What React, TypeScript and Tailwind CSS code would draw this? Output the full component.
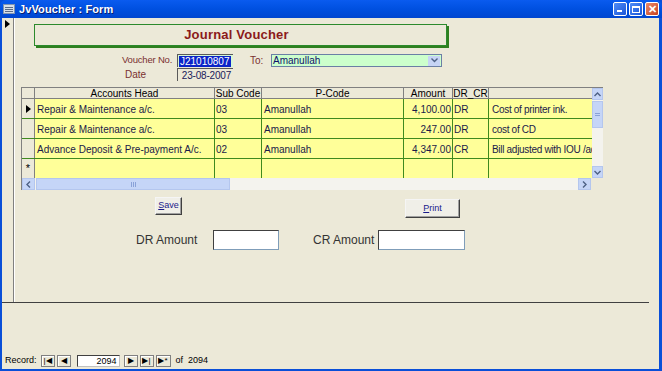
import React from 'react';

const rows = [
  { head: 'Repair & Maintenance a/c.', sub: '03', p: 'Amanullah', amt: '4,100.00', drcr: 'DR', memo: 'Cost of printer ink.', current: true },
  { head: 'Repair & Maintenance a/c.', sub: '03', p: 'Amanullah', amt: '247.00', drcr: 'DR', memo: 'cost of CD' },
  { head: 'Advance Deposit & Pre-payment A/c.', sub: '02', p: 'Amanullah', amt: '4,347.00', drcr: 'CR', memo: 'Bill adjusted with IOU /ad' },
];

const cols = 'grid grid-cols-[13px_180px_47px_142px_49px_36px_103px]';

function NavBtn({ children, w = 'w-[14px]' }: { children: React.ReactNode; w?: string }) {
  return (
    <div className={`${w} h-[12px] bg-[#ECE9D8] border border-[#808080] shadow-[inset_1px_1px_0_#fff] flex items-center justify-center text-[8px] leading-none text-black`}>
      {children}
    </div>
  );
}

export default function App() {
  return (
    <div className="w-[662px] h-[371px] bg-[#0A4FD8] font-['Liberation_Sans',Arial,sans-serif] overflow-hidden flex flex-col">
      {/* title bar */}
      <div className="h-[18px] flex items-center bg-gradient-to-b from-[#0A5BEF] via-[#0050E0] to-[#0046D0] rounded-t-[6px] pl-[3px] pr-[3px]">
        <div className="w-[12px] h-[10px] bg-[#d8dfe8] border border-[#8093b0] flex flex-col justify-center gap-[1px] px-[1px]">
          <div className="h-[1px] bg-[#5a6a86]" />
          <div className="h-[1px] bg-[#5a6a86]" />
          <div className="h-[1px] bg-[#5a6a86]" />
        </div>
        <span className="ml-[4px] text-white font-bold text-[11px] tracking-[0.1px] [text-shadow:1px_1px_0_#0a1e70]">JvVoucher : Form</span>
        <div className="ml-auto flex gap-[2px]">
          <div className="w-[14px] h-[14px] rounded-[2px] border border-white bg-gradient-to-br from-[#4f8cf7] to-[#1b55d8] flex items-end justify-start pl-[3px] pb-[3px]">
            <div className="w-[5px] h-[2px] bg-white" />
          </div>
          <div className="w-[14px] h-[14px] rounded-[2px] border border-white bg-gradient-to-br from-[#4f8cf7] to-[#1b55d8] flex items-center justify-center">
            <div className="w-[8px] h-[7px] border border-white border-t-2" />
          </div>
          <div className="w-[14px] h-[14px] rounded-[2px] border border-white bg-gradient-to-br from-[#e88a6a] to-[#c7401c] flex items-center justify-center text-white text-[11px] font-bold leading-none">
            ✕
          </div>
        </div>
      </div>

      {/* body */}
      <div className="flex-1 mx-[2px] mr-[3px] mb-[2px] bg-[#ECE9D8] flex flex-col">
        <div className="h-[285px] flex border-b border-[#404040] mr-[10px]">
          {/* record selector */}
          <div className="w-[12px] border-r border-[#808080] shadow-[1px_0_0_#fff] pt-[2px] pl-[3px]">
            <div className="w-0 h-0 border-y-[4px] border-y-transparent border-l-[5px] border-l-black" />
          </div>

          <div className="flex-1 pl-[20px] pt-[6px] text-[11px]">
            {/* title */}
            <div className="w-[413px] h-[22px] border border-[#2c8a2c] shadow-[2px_2px_0_#2f7f1f] bg-[#ECE9D8] flex items-center justify-center">
              <span className="ml-[-8px] text-[#8B1A1A] font-bold text-[13px] tracking-[0.2px]">Journal Voucher</span>
            </div>

            {/* voucher no + to */}
            <div className="flex items-center mt-[8px] ml-[88px] h-[13px]">
              <span className="w-[55px] whitespace-nowrap text-[9.5px] tracking-[-0.2px] text-[#7a3030]">Voucher No.</span>
              <div className="w-[56px] h-[13px] bg-[#D6F7D6] border-t border-l border-[#5a5a5a] flex items-center pl-[1px]">
                <span className="bg-[#0A24C8] text-white text-[10px] leading-[11px] px-[1px]">J21010807</span>
              </div>
              <span className="ml-[17px] w-[21px] text-[10px] text-[#7a3030]">To:</span>
              <div className="w-[171px] h-[13px] bg-[#CCFFCC] border border-[#6b7fa5] flex items-center">
                <span className="pl-[1px] text-[10px] text-[#10106a] flex-1">Amanullah</span>
                <div className="w-[12px] h-[10px] mr-[1px] bg-[#c6d4f5] flex items-center justify-center">
                  <svg width="7" height="5" viewBox="0 0 7 5"><path d="M0.5 0.5 L3.5 3.5 L6.5 0.5" stroke="#4d6185" strokeWidth="1.4" fill="none" /></svg>
                </div>
              </div>
            </div>
            <div className="flex items-center mt-[1px] ml-[91px] h-[13px]">
              <span className="w-[52px] text-[10px] text-[#7a3030]">Date</span>
              <div className="w-[56px] h-[13px] bg-[#ECE9D8] border-t border-l border-[#5a5a5a] flex items-center justify-end pr-[2px]">
                <span className="text-[10px] text-[#1a1a5a] tracking-[-0.2px]">23-08-2007</span>
              </div>
            </div>

            {/* grid */}
            <div className="mt-[6px] ml-[-13px] w-[582px] border-t border-l border-[#808080] flex flex-col text-[10px] text-[#1a1a4a]">
              <div className="flex">
                <div className="w-[570px]">
                  <div className={`${cols} h-[11px] bg-[#ECE9D8] border-b border-[#808080]`}>
                    <div className="border-r border-[#808080]" />
                    <div className="border-r border-[#808080] text-center leading-[11px] text-black">Accounts Head</div>
                    <div className="border-r border-[#808080] text-center leading-[11px] text-black">Sub Code</div>
                    <div className="border-r border-[#808080] text-center leading-[11px] text-black">P-Code</div>
                    <div className="border-r border-[#808080] text-center leading-[11px] text-black">Amount</div>
                    <div className="border-r border-[#808080] text-center leading-[11px] text-black">DR_CR</div>
                    <div />
                  </div>
                  {rows.map((r, i) => (
                    <div key={i} className={`${cols} h-[20px] border-b border-[#3f8a1f]`}>
                      <div className="bg-[#ECE9D8] border-r border-[#808080] flex items-center justify-center">
                        {r.current && <div className="w-0 h-0 border-y-[4px] border-y-transparent border-l-[5px] border-l-black" />}
                      </div>
                      <div className="bg-[#FFFF99] border-r border-[#3f8a1f] pl-[2px] pt-[3px] whitespace-nowrap overflow-hidden">{r.head}</div>
                      <div className="bg-[#FFFF99] border-r border-[#3f8a1f] pl-[1px] pt-[3px]">{r.sub}</div>
                      <div className="bg-[#FFFF99] border-r border-[#3f8a1f] pl-[2px] pt-[3px]">{r.p}</div>
                      <div className="bg-[#FFFF99] border-r border-[#3f8a1f] pr-[1px] pt-[3px] text-right">{r.amt}</div>
                      <div className="bg-[#FFFF99] border-r border-[#3f8a1f] pl-[1px] pt-[3px]">{r.drcr}</div>
                      <div className="bg-[#FFFF99] pl-[3px] pt-[3px] whitespace-nowrap tracking-[-0.3px]">{r.memo}</div>
                    </div>
                  ))}
                  <div className={`${cols} h-[19px]`}>
                    <div className="bg-[#ECE9D8] border-r border-[#808080] flex items-center justify-center text-[11px] text-black">*</div>
                    <div className="bg-[#FFFF99] border-r border-[#3f8a1f]" />
                    <div className="bg-[#FFFF99] border-r border-[#3f8a1f]" />
                    <div className="bg-[#FFFF99] border-r border-[#3f8a1f]" />
                    <div className="bg-[#FFFF99] border-r border-[#3f8a1f]" />
                    <div className="bg-[#FFFF99] border-r border-[#3f8a1f]" />
                    <div className="bg-[#FFFF99]" />
                  </div>
                </div>
                {/* vertical scrollbar */}
                <div className="w-[12px] bg-[#F4F3EE] flex flex-col">
                  <div className="h-[12px] bg-[#C5D5F7] border border-[#b4c6ee] flex items-center justify-center">
                    <svg width="7" height="5" viewBox="0 0 7 5"><path d="M0.5 4 L3.5 1 L6.5 4" stroke="#4d6185" strokeWidth="1.4" fill="none" /></svg>
                  </div>
                  <div className="h-[27px] mt-[1px] bg-[#C5D5F7] border border-[#b4c6ee] flex flex-col items-center justify-center gap-[1px]">
                    <div className="w-[5px] h-[1px] bg-[#8aa2d8]" />
                    <div className="w-[5px] h-[1px] bg-[#8aa2d8]" />
                  </div>
                  <div className="flex-1" />
                  <div className="h-[12px] bg-[#C5D5F7] border border-[#b4c6ee] flex items-center justify-center">
                    <svg width="7" height="5" viewBox="0 0 7 5"><path d="M0.5 1 L3.5 4 L6.5 1" stroke="#4d6185" strokeWidth="1.4" fill="none" /></svg>
                  </div>
                </div>
              </div>
              {/* horizontal scrollbar */}
              <div className="flex h-[12px] bg-[#F4F3EE]">
                <div className="w-[13px] bg-[#C5D5F7] border border-[#b4c6ee] flex items-center justify-center">
                  <svg width="5" height="7" viewBox="0 0 5 7"><path d="M4 0.5 L1 3.5 L4 6.5" stroke="#4d6185" strokeWidth="1.4" fill="none" /></svg>
                </div>
                <div className="w-[194px] ml-[1px] bg-[#C5D5F7] border border-[#b4c6ee] flex items-center justify-center gap-[1px]">
                  <div className="w-[1px] h-[5px] bg-[#8aa2d8]" />
                  <div className="w-[1px] h-[5px] bg-[#8aa2d8]" />
                  <div className="w-[1px] h-[5px] bg-[#8aa2d8]" />
                </div>
                <div className="flex-1" />
                <div className="w-[13px] bg-[#C5D5F7] border border-[#b4c6ee] flex items-center justify-center">
                  <svg width="5" height="7" viewBox="0 0 5 7"><path d="M1 0.5 L4 3.5 L1 6.5" stroke="#4d6185" strokeWidth="1.4" fill="none" /></svg>
                </div>
                <div className="w-[12px] bg-[#ECE9D8]" />
              </div>
            </div>

            {/* buttons */}
            <div className="flex items-start mt-[7px]">
              <div className="ml-[121px] w-[27px] h-[18px] bg-[#F0EFE8] border border-[#f5f5f5] border-r-[#404040] border-b-[#404040] shadow-[inset_-1px_-1px_0_#a0a0a0] flex items-center justify-center text-[9px] text-[#1a1a8a]">
                <span><u>S</u>ave</span>
              </div>
              <div className="ml-[223px] mt-[2px] w-[55px] h-[19px] bg-[#F0EFE8] border border-[#f5f5f5] border-r-[#404040] border-b-[#404040] shadow-[inset_-1px_-1px_0_#a0a0a0] flex items-center justify-center text-[9px] text-[#1a1a8a]">
                <span><u>P</u>rint</span>
              </div>
            </div>

            {/* amounts */}
            <div className="flex items-center mt-[12px] text-[12px] text-[#333]">
              <span className="ml-[102px] w-[77px]">DR Amount</span>
              <div className="w-[66px] h-[20px] bg-white border border-[#7f9db9] border-t-[#404040] border-l-[#404040]" />
              <span className="ml-[34px] w-[65px]">CR Amount</span>
              <div className="w-[87px] h-[20px] bg-white border border-[#7f9db9] border-t-[#404040] border-l-[#404040]" />
            </div>
          </div>
        </div>

        <div className="flex-1" />

        {/* record navigator */}
        <div className="h-[14px] mb-[1px] flex items-center pl-[3px] text-[9px] text-black gap-[2px]">
          <span className="mr-[2px]">Record:</span>
          <NavBtn>|◀</NavBtn>
          <NavBtn>◀</NavBtn>
          <div className="ml-[4px] w-[43px] h-[12px] bg-white border border-[#404040] border-r-[#c0c0c0] border-b-[#c0c0c0] text-right pr-[2px] leading-[10px]">2094</div>
          <div className="ml-[2px]"><NavBtn>▶</NavBtn></div>
          <NavBtn>▶|</NavBtn>
          <NavBtn w="w-[15px]">▶*</NavBtn>
          <span className="ml-[3px]">of&nbsp; 2094</span>
        </div>
      </div>
    </div>
  );
}
